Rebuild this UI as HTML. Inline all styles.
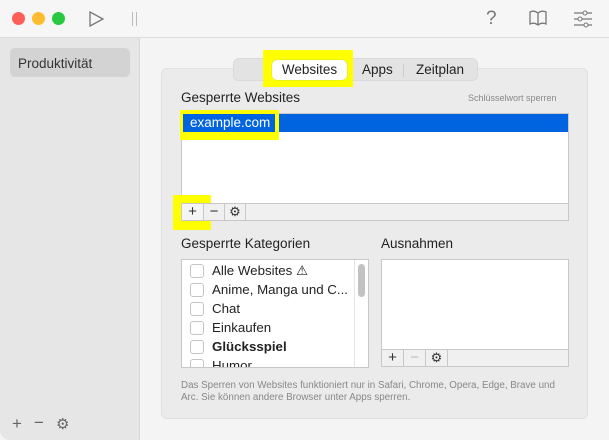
<!DOCTYPE html><html><head><meta charset="utf-8"><style>
*{box-sizing:border-box;margin:0;padding:0}
body{width:609px;height:440px;overflow:hidden;font-family:"Liberation Sans",sans-serif;background:#f4f4f4;position:relative;color:#222}
.a{position:absolute}
.title{left:0;top:0;width:609px;height:38px;background:#f6f6f6;border-bottom:1px solid #dcdcdc}
.dot{top:12px;width:13px;height:13px;border-radius:50%}
.side{left:0;top:38px;width:140px;height:402px;background:#e6e6e6;border-right:1px solid #d8d8d8;border-bottom-left-radius:10px}
.panel{left:161px;top:68px;width:427px;height:351px;background:#ebebeb;border:1px solid #e0e0e0;border-radius:6px}
.box{background:#fff;border:1px solid #c8c8c8}
.tb{height:18px;border:1px solid #c8c8c8;background:#f0f0f0;display:flex}
.tb span{width:22px;border-right:1px solid #c8c8c8;text-align:center;font-size:15px;line-height:16px;color:#333}
.row{position:absolute;left:8px;font-size:13.3px;display:flex;align-items:center}
.cb{width:14px;height:14px;border:1px solid #c4c4c4;border-radius:3px;background:#fff;margin-right:8px}
.y{background:#ffff00}
</style></head><body>
<div class="a title"></div>
<div class="a dot" style="left:12px;background:#fe5f57"></div>
<div class="a dot" style="left:32px;background:#febc2e"></div>
<div class="a dot" style="left:52px;background:#28c840"></div>
<svg class="a" style="left:88px;top:10px" width="18" height="18"><path d="M2 2L15 9L2 16Z" fill="none" stroke="#777" stroke-width="1.3"/></svg>
<div class="a" style="left:132px;top:12px;width:1px;height:14px;background:#bbb"></div>
<div class="a" style="left:136px;top:12px;width:1px;height:14px;background:#bbb"></div>
<div class="a" style="left:486px;top:8px;font-size:19px;color:#777">?</div>
<svg class="a" style="left:528px;top:9px" width="20" height="18"><path d="M2 3Q6 1 10 4Q14 1 18 3V15Q14 13 10 16Q6 13 2 15Z M10 4V16" fill="none" stroke="#777" stroke-width="1.3"/></svg>
<svg class="a" style="left:573px;top:10px" width="20" height="18"><path d="M1 3H19M1 9H19M1 15H19" stroke="#777" stroke-width="1.2"/><circle cx="12" cy="3" r="2" fill="#f6f6f6" stroke="#777"/><circle cx="7" cy="9" r="2" fill="#f6f6f6" stroke="#777"/><circle cx="13" cy="15" r="2" fill="#f6f6f6" stroke="#777"/></svg>
<div class="a side"></div>
<div class="a" style="left:10px;top:48px;width:120px;height:29px;background:#d3d3d3;border-radius:5px;font-size:13.5px;padding:8px 0 0 8px;color:#333">Produktivität</div>
<div class="a" style="left:12px;top:414px;font-size:17px;color:#666">+</div>
<div class="a" style="left:34px;top:413px;font-size:17px;color:#666">−</div>
<div class="a" style="left:56px;top:415px;font-size:15px;color:#666">⚙</div>
<div class="a panel"></div>
<div class="a" style="left:233px;top:58px;width:245px;height:23px;background:#e3e3e3;border-radius:6px;border:1px solid #dadada"></div>
<div class="a y" style="left:263px;top:50px;width:90px;height:37px"></div>
<div class="a" style="left:272px;top:60px;width:75px;height:20px;background:#fff;border-radius:5px;box-shadow:0 0 1px #999;font-size:13.5px;text-align:center;line-height:20px">Websites</div>
<div class="a" style="left:362px;top:62px;font-size:13.5px">Apps</div>
<div class="a" style="left:403px;top:64px;width:1px;height:13px;background:#ccc"></div>
<div class="a" style="left:416px;top:62px;font-size:13.5px">Zeitplan</div>
<div class="a" style="left:181px;top:90px;font-size:13.5px">Gesperrte Websites</div>
<div class="a" style="left:468px;top:93px;font-size:9px;color:#888">Schlüsselwort sperren</div>
<div class="a box" style="left:181px;top:113px;width:388px;height:92px"></div>
<div class="a" style="left:182px;top:114px;width:386px;height:18px;background:#0064e1"></div>
<div class="a y" style="left:180px;top:110px;width:99px;height:30px"></div>
<div class="a" style="left:183px;top:114px;width:92px;height:18px;background:#0064e1;color:#fff;font-size:13.5px;padding:1px 0 0 7px">example.com</div>
<div class="a y" style="left:173px;top:195px;width:38px;height:35px"></div>
<div class="a tb" style="left:181px;top:203px;width:388px"><span style="background:#f5f5f5">+</span><span style="border-right:none;width:20px">−</span><span style="font-size:13px;border-left:1px solid #c8c8c8">⚙</span></div>
<div class="a" style="left:181px;top:236px;font-size:13.5px">Gesperrte Kategorien</div>
<div class="a" style="left:381px;top:236px;font-size:13.5px">Ausnahmen</div>
<div class="a box" style="left:181px;top:259px;width:188px;height:109px;overflow:hidden">
<div class="row" style="top:3px"><div class="cb"></div>Alle Websites ⚠</div>
<div class="row" style="top:22px"><div class="cb"></div>Anime, Manga und C...</div>
<div class="row" style="top:41px"><div class="cb"></div>Chat</div>
<div class="row" style="top:60px"><div class="cb"></div>Einkaufen</div>
<div class="row" style="top:79px;font-weight:bold"><div class="cb"></div>Glücksspiel</div>
<div class="row" style="top:98px"><div class="cb"></div>Humor</div>
<div style="position:absolute;left:172px;top:0;width:1px;height:109px;background:#e4e4e4"></div>
<div style="position:absolute;left:176px;top:4px;width:7px;height:33px;border-radius:4px;background:#c2c2c2"></div>
</div>
<div class="a box" style="left:381px;top:259px;width:188px;height:91px"></div>
<div class="a tb" style="left:381px;top:349px;width:188px"><span>+</span><span style="color:#bbb">−</span><span style="font-size:13px">⚙</span></div>
<div class="a" style="left:181px;top:380px;font-size:9.8px;color:#888;line-height:12px;width:400px;white-space:nowrap">Das Sperren von Websites funktioniert nur in Safari, Chrome, Opera, Edge, Brave und<br>Arc. Sie können andere Browser unter Apps sperren.</div>
</body></html>
